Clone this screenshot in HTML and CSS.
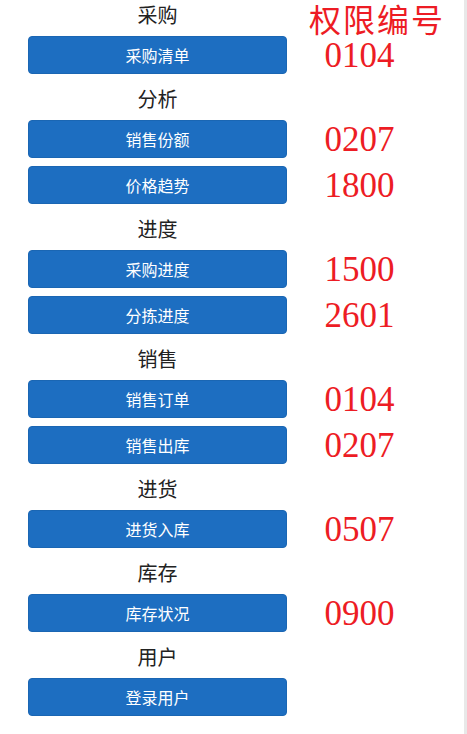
FILE: index.html
```html
<!DOCTYPE html>
<html>
<head>
<meta charset="UTF-8">
<link rel="stylesheet" href="styles.css">
</head>
<body>
 <div class="page">
   <div class="row title-row head-row">
     <div class="group-title">采购</div>
     <div class="note-head">权限编号</div>
   </div>
   <div class="row btn-row">
     <button class="btn">采购清单</button>
     <div class="code">0104</div>
   </div>

   <div class="row title-row">
     <div class="group-title">分析</div>
   </div>
   <div class="row btn-row">
     <button class="btn">销售份额</button>
     <div class="code">0207</div>
   </div>
   <div class="row btn-row">
     <button class="btn">价格趋势</button>
     <div class="code">1800</div>
   </div>

   <div class="row title-row">
     <div class="group-title">进度</div>
   </div>
   <div class="row btn-row">
     <button class="btn">采购进度</button>
     <div class="code">1500</div>
   </div>
   <div class="row btn-row">
     <button class="btn">分拣进度</button>
     <div class="code">2601</div>
   </div>

   <div class="row title-row">
     <div class="group-title">销售</div>
   </div>
   <div class="row btn-row">
     <button class="btn">销售订单</button>
     <div class="code">0104</div>
   </div>
   <div class="row btn-row">
     <button class="btn">销售出库</button>
     <div class="code">0207</div>
   </div>

   <div class="row title-row">
     <div class="group-title">进货</div>
   </div>
   <div class="row btn-row">
     <button class="btn">进货入库</button>
     <div class="code">0507</div>
   </div>

   <div class="row title-row">
     <div class="group-title">库存</div>
   </div>
   <div class="row btn-row">
     <button class="btn">库存状况</button>
     <div class="code">0900</div>
   </div>

   <div class="row title-row">
     <div class="group-title">用户</div>
   </div>
   <div class="row btn-row">
     <button class="btn">登录用户</button>
     <div class="code"></div>
   </div>
 </div>
</body>
</html>
```

FILE: styles.css
```css
html, body {
  margin: 0;
  padding: 0;
  background: #fff;
}

.page {
  min-height: 100vh;
  box-sizing: border-box;
  border-right: 3px solid #e8e8e8;
  font-family: "Noto Sans CJK SC", "Noto Sans", sans-serif;
}

.row {
  display: grid;
  grid-template-columns: 259px 1fr;
  grid-template-rows: 100%;
  padding-left: 28px;
}

/* group heading above the buttons (top margin collapses with the button's 8px) */
.title-row {
  height: 22px;
  margin: 14px 0 10px 0;
}

/* first heading also carries the column caption on the right */
.head-row {
  height: 32px;
  margin: 0 0 4px 0;
}
.head-row .group-title {
  align-self: end;
  margin-bottom: 6px;
}

.group-title {
  font-size: 20px;
  line-height: 22px;
  color: #222;
  text-align: center;
}

.note-head {
  font-size: 32px;
  line-height: 28px;
  padding: 4px 0 0 3px;
  letter-spacing: 2px;
  color: #ed1c24;
  text-align: center;
  white-space: nowrap;
}

.btn-row {
  height: 38px;
  margin-bottom: 8px;
}

.btn {
  height: 38px;
  margin: 0;
  padding: 0;
  border: 1px solid #1a66b3;
  border-radius: 4px;
  background-color: #1d6ec1;
  color: #fff;
  font-family: "Noto Sans CJK SC", "Noto Sans", sans-serif;
  font-size: 16px;
  text-align: center;
}

.code {
  font-family: "Liberation Serif", serif;
  font-size: 35px;
  line-height: 40px;
  padding-right: 32px;
  color: #ed1c24;
  text-align: center;
}
```
